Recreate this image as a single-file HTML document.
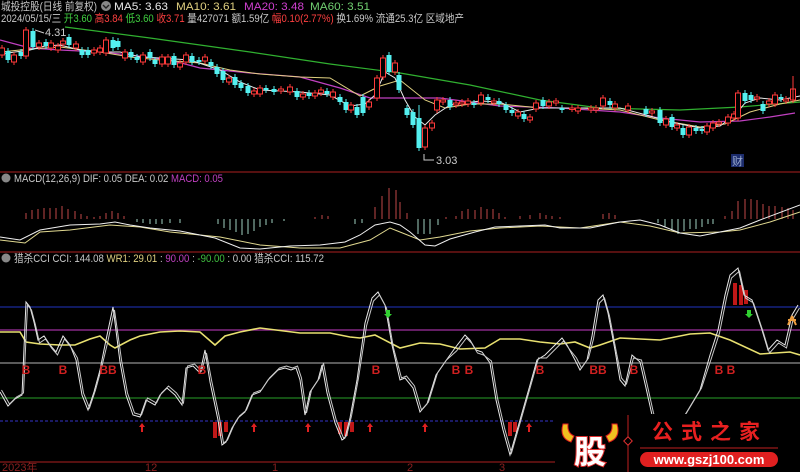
<!DOCTYPE html>
<html><head><meta charset="utf-8"><style>
html,body{margin:0;padding:0;background:#000;width:800px;height:472px;overflow:hidden}
svg{display:block}
text{font-family:"Liberation Sans","Noto Sans CJK SC",sans-serif}
</style></head><body>
<svg id="s" width="800" height="472" xmlns="http://www.w3.org/2000/svg">
<rect width="800" height="472" fill="#000"/>
<g font-size="11">
<text x="1" y="10" fill="#c8c8c8" textLength="96" lengthAdjust="spacingAndGlyphs">城投控股(日线 前复权)</text>
<circle cx="106" cy="6" r="5" fill="#888"/><path d="M103 5l3 3 3-3" stroke="#222" stroke-width="1.4" fill="none"/>
<text x="114" y="10" fill="#e8e8e8" textLength="54" lengthAdjust="spacingAndGlyphs">MA5: 3.63</text>
<text x="176" y="10" fill="#e0d080" textLength="60" lengthAdjust="spacingAndGlyphs">MA10: 3.61</text>
<text x="244" y="10" fill="#d040d0" textLength="60" lengthAdjust="spacingAndGlyphs">MA20: 3.48</text>
<text x="310" y="10" fill="#70d070" textLength="60" lengthAdjust="spacingAndGlyphs">MA60: 3.51</text>
<text x="1" y="22" fill="#c8c8c8" textLength="463" lengthAdjust="spacingAndGlyphs">2024/05/15/三 <tspan fill="#40d040">开3.60</tspan> <tspan fill="#ff4040">高3.84</tspan> <tspan fill="#40d040">低3.60</tspan> <tspan fill="#ff4040">收3.71</tspan> 量427071 额1.59亿 <tspan fill="#ff4040">幅0.10(2.77%)</tspan> 换1.69% 流通25.3亿 区域地产</text>
</g>
<g stroke="#8a1a1a" stroke-width="1.3"><line x1="0" y1="172" x2="800" y2="172"/><line x1="0" y1="252" x2="800" y2="252"/><line x1="0" y1="462" x2="555" y2="462"/></g>
<g font-size="11">
<circle cx="6" cy="178" r="4.5" fill="#888"/><circle cx="6" cy="258" r="4.5" fill="#888"/>
<text x="14" y="182" fill="#c8c8c8" textLength="209" lengthAdjust="spacingAndGlyphs">MACD(12,26,9)  DIF: 0.05  DEA: 0.02 <tspan fill="#c040c0">MACD: 0.05</tspan></text>
<text x="14" y="262" fill="#c8c8c8" textLength="310" lengthAdjust="spacingAndGlyphs">猎杀CCI  CCI: 144.08 <tspan fill="#e0d080">WR1: 29.01</tspan> : <tspan fill="#c040c0">90.00</tspan> : <tspan fill="#40c040">-90.00</tspan> : 0.00  猎杀CCI: 115.72</text>
</g>
<g id="main"></g>
<text x="45" y="36" fill="#ccc" font-size="11">4.31</text><path d="M35 30 L44 33" stroke="#ccc"/>
<text x="436" y="164" fill="#ccc" font-size="11">3.03</text><path d="M424 154 L424 160 L434 160" stroke="#ccc" fill="none"/>
<rect x="731" y="154" width="13" height="13" fill="#1c2c6c"/><text x="732" y="165" fill="#9ac" font-size="11">财</text>
<g stroke-width="1.2">
<line x1="0" y1="307" x2="800" y2="307" stroke="#1a2a9a"/>
<line x1="0" y1="330" x2="800" y2="330" stroke="#a030a0"/>
<line x1="0" y1="363" x2="800" y2="363" stroke="#909090"/>
<line x1="0" y1="398" x2="800" y2="398" stroke="#208020"/>
<line x1="0" y1="421" x2="555" y2="421" stroke="#2a2aa0" stroke-dasharray="3,2"/>
</g>
<g id="cci"></g>
<g font-size="11" fill="#8a2020"><text x="2" y="471">2023年</text><text x="145" y="471">12</text><text x="272" y="471">1</text><text x="407" y="471">2</text><text x="499" y="471">3</text></g>
<rect x="555" y="414" width="245" height="58" fill="#000"/>
<path d="M563 424 q-4 14 8 18 l3-6 q-7-3-6-12z" fill="#f0c020" stroke="#e02020"/>
<path d="M617 424 q4 14-8 18 l-3-6 q7-3 6-12z" fill="#f0c020" stroke="#e02020"/>
<text x="590" y="463" text-anchor="middle" font-size="32" font-weight="bold" fill="#fff" stroke="#e03030" stroke-width="2" paint-order="stroke">股</text>
<line x1="628" y1="415" x2="628" y2="472" stroke="#c02020"/>
<rect x="625" y="438" width="6" height="6" transform="rotate(45 628 441)" fill="#000" stroke="#e03030"/>
<text x="710" y="439" text-anchor="middle" font-size="21" font-weight="bold" fill="#e82020" letter-spacing="8" font-family="Noto Serif CJK SC,serif">公式之家</text>
<line x1="640" y1="448" x2="778" y2="448" stroke="#c02020"/>
<rect x="640" y="452" width="138" height="15" rx="7.5" fill="#e02020"/>
<text x="709" y="464" text-anchor="middle" font-size="13" font-weight="bold" fill="#fff">www.gszj100.com</text>
<script>
var NS="http://www.w3.org/2000/svg";
function el(p,t,a){var e=document.createElementNS(NS,t);for(var k in a)e.setAttribute(k,a[k]);p.appendChild(e);return e}
function pl(p,pts,c,w){el(p,"polyline",{points:pts,fill:"none",stroke:c,"stroke-width":w||1})}
var m=document.getElementById("main");
pl(m,"65,27 150,38 250,52 330,64 400,73 470,85 540,100 600,108 680,110 740,107 800,102","#30b030",1.2);
pl(m,"0,40 30,48 60,50 100,52 130,55 170,60 200,68 250,73 300,77 340,88 370,98 400,98 440,98 500,106 560,108 620,112 660,118 700,122 740,121 770,117 795,113","#c040c0",1.2);
pl(m,"0,52 30,49 60,47 100,52 130,57 160,60 200,63 230,70 260,74 300,77 330,78 360,96 380,86 400,80 425,100 445,108 470,104 500,104 540,108 580,108 620,110 660,120 700,127 725,124 750,112 780,104 800,100","#e0d080",1);
pl(m,"0,54 30,50 45,46 60,45 80,50 100,52 120,52 140,57 160,58 190,60 220,70 240,82 260,90 300,92 330,95 350,106 365,104 375,95 385,72 395,78 405,100 415,117 425,125 435,115 450,105 480,101 500,102 520,112 540,108 580,108 620,108 650,116 670,122 700,128 720,126 735,115 745,103 760,98 780,100 800,96","#e8e8e8",1);
var C=[[2,48,55,0],[8,51,60,1],[14,55,62,0],[21,52,56,1],[26,30,56,0],[33,31,47,1],[39,43,47,0],[46,42,46,1],[51,43,48,0],[58,46,50,0],[63,41,44,0],[69,37,45,1],[76,44,48,0],[82,50,55,1],[88,50,55,1],[94,50,53,0],[100,48,52,0],[106,40,53,0],[113,40,48,1],[118,41,47,1],[125,52,58,0],[131,52,57,1],[137,57,60,1],[143,55,62,0],[150,52,58,1],[155,60,64,1],[162,57,64,0],[168,57,64,0],[174,56,65,1],[180,63,67,0],[186,55,62,0],[192,56,62,1],[199,60,62,1],[205,57,61,0],[211,62,66,1],[217,67,74,1],[223,71,80,1],[229,78,82,0],[235,77,85,1],[241,83,88,1],[248,86,93,1],[254,91,94,0],[260,88,94,0],[266,88,90,1],[274,89,92,1],[281,89,91,0],[290,87,92,0],[297,91,97,1],[303,94,97,0],[309,93,96,1],[315,93,96,0],[321,90,93,0],[327,91,94,1],[333,92,97,0],[340,97,102,1],[346,102,110,1],[351,105,110,0],[357,107,115,1],[363,97,113,1],[369,102,107,0],[377,78,98,0],[383,58,77,0],[389,55,72,1],[395,63,72,0],[399,75,90,1],[407,108,115,1],[413,112,125,1],[419,118,148,1],[425,128,147,0],[432,123,128,0],[437,100,110,0],[443,100,102,0],[450,100,107,1],[456,103,105,0],[462,102,104,0],[468,101,104,0],[474,103,105,1],[481,95,103,0],[488,97,100,1],[494,101,103,0],[499,101,104,1],[506,105,110,1],[512,110,113,1],[518,112,116,0],[524,114,119,1],[530,117,120,0],[536,103,109,0],[543,100,106,1],[549,102,106,0],[556,101,103,0],[562,108,110,1],[572,108,109,0],[578,108,111,0],[591,108,110,0],[596,108,110,0],[603,98,106,0],[610,101,105,1],[615,104,108,0],[628,106,110,0],[646,109,114,1],[652,111,113,0],[660,110,123,1],[666,119,125,0],[672,117,127,1],[677,125,128,0],[683,128,135,1],[689,127,135,0],[696,128,131,1],[702,129,131,1],[707,126,132,0],[713,123,128,0],[719,122,124,0],[728,117,123,0],[734,114,118,0],[738,93,118,0],[745,93,101,1],[751,95,100,1],[757,97,99,0],[763,104,111,1],[769,101,104,0],[775,95,104,0],[781,97,99,1],[786,99,101,0],[793,89,100,0]];
C.forEach(function(c){var col=c[3]?"#54f0f0":"#ff3a3a";var x=c[0],t=c[1],b=c[2];
el(m,"line",{x1:x,y1:t-3,x2:x,y2:b+3,stroke:col});
if(c[3])el(m,"rect",{x:x-2.5,y:t,width:5,height:Math.max(b-t,1.5),fill:col});
else el(m,"rect",{x:x-2.5,y:t,width:5,height:Math.max(b-t,1.5),fill:"#000",stroke:col,"stroke-width":1});});
el(m,"line",{x1:419,y1:105,x2:419,y2:150,stroke:"#54f0f0"});el(m,"line",{x1:793,y1:76,x2:793,y2:100,stroke:"#ff3a3a"});
var Z=219;
var P=[[26,6],[32,9],[38,10],[44,11],[50,11],[56,11],[62,13],[68,10],[75,8],[81,5],[87,3],[94,2],[100,3],[106,6],[112,8],[118,6],[124,3],[315,2],[322,4],[328,3],[375,12],[382,23],[389,31],[396,29],[400,17],[407,6],[446,2],[456,3],[462,8],[468,10],[475,9],[481,12],[487,10],[493,10],[499,6],[505,2],[520,3],[530,4],[540,6],[546,4],[552,3],[560,2],[603,5],[609,6],[615,4],[725,3],[732,8],[738,18],[745,20],[751,20],[757,19],[763,15],[769,13],[775,13],[782,12],[788,11],[793,9]];
var N=[[137,3],[143,4],[150,5],[156,5],[162,5],[170,4],[180,4],[218,5],[224,9],[230,11],[236,13],[242,16],[248,15],[254,12],[260,8],[266,6],[272,4],[284,2],[355,5],[362,4],[418,15],[424,15],[430,15],[438,6],[658,4],[665,8],[672,12],[678,15],[684,12],[690,10],[696,10],[702,8],[708,5],[713,5]];
P.forEach(function(p){el(m,"line",{x1:p[0],y1:Z,x2:p[0],y2:Z-p[1],stroke:"#c04848"})});
N.forEach(function(p){el(m,"line",{x1:p[0],y1:Z,x2:p[0],y2:Z+p[1],stroke:"#a0d0c0"})});
pl(m,"0,240 25,243 40,232 70,230 110,225 140,227 170,232 220,237 260,245 300,248 340,248 370,240 390,228 400,232 420,240 440,237 470,231 500,228 540,226 580,228 620,222 650,226 680,233 720,232 740,230 770,222 800,212","#e0d890",1);
pl(m,"0,237 20,240 40,230 70,225 100,224 115,222 130,225 150,228 180,231 215,238 240,248 260,249 290,246 320,245 345,242 360,235 375,225 390,222 400,225 410,232 425,245 435,246 450,239 475,232 495,227 520,226 545,225 560,228 590,228 620,222 640,220 660,225 680,233 700,236 720,232 740,228 760,220 800,205","#f0f0f0",1);
var g=document.getElementById("cci");
[[215,422,16],[220,422,14],[226,422,10],[340,422,12],[346,422,14],[352,422,10],[510,422,14],[515,422,10],[735,283,22],[741,285,20],[746,290,14]].forEach(function(r){el(g,"rect",{x:r[0]-2,y:r[1],width:4,height:r[2],fill:"#c01818"})});
pl(g,"0,332 20,332 26,342 40,344 60,345 75,345 90,339 100,336 110,345 115,348 130,340 140,336 160,332 180,331 200,332 215,345 225,336 240,332 260,328 300,333 330,333 350,337 360,338 375,335 400,348 420,343 440,344 460,349 485,348 500,339 520,339 540,342 560,344 575,342 590,348 600,345 620,338 660,340 690,334 710,333 730,340 760,354 790,352 800,355","#e8e070",1.6);
var W="0,392 8,406 15,399 22,395 26,302 30,307 34,322 38,340 44,336 50,345 56,352 63,336 70,345 76,360 82,395 88,410 94,392 100,370 106,340 113,307 120,362 126,395 133,415 140,417 146,400 155,405 160,395 167,388 175,395 182,405 186,368 193,366 200,373 205,350 210,382 218,420 222,445 226,442 232,428 238,418 245,412 252,395 260,392 268,380 278,370 285,368 291,370 296,368 300,380 305,415 310,392 318,380 322,365 327,393 335,423 342,440 345,438 350,418 357,380 365,323 372,298 378,292 385,305 392,345 400,380 405,378 413,388 420,412 427,404 436,375 445,362 455,348 465,335 470,340 476,350 482,352 490,363 496,400 503,430 510,455 520,420 530,385 537,360 545,355 555,345 562,338 567,345 575,360 580,370 587,360 592,336 598,300 603,295 608,313 615,350 620,380 625,386 632,355 640,362 646,388 652,415 658,430 663,440 668,435 685,415 700,390 710,355 718,330 725,295 730,275 738,268 744,295 752,300 762,330 768,350 777,340 785,345 792,315 798,305";
pl(g,W,"#e8e8e8",1);
var W2=W.split(" ").map(function(s){var a=s.split(",");return (+a[0]+1.5)+","+(+a[1]+(a[1]<360?3:-2))}).join(" ");
pl(g,W2,"#c8c8c8",1);
[[26,""],[63,""],[108,"BB"],[202,""],[376,""],[456,""],[469,""],[540,""],[598,"BB"],[634,""],[719,""],[731,""]].forEach(function(b){var t=el(g,"text",{x:b[0],y:374,fill:"#d02020","font-size":12,"font-weight":"bold","text-anchor":"middle"});t.textContent=b[1]||"B"});
[142,254,308,370,425,529].forEach(function(x){el(g,"path",{d:"M"+x+" 423 l-3 4 h2 v5 h2 v-5 h2z",fill:"#e02020"})});
[388,749].forEach(function(x){el(g,"path",{d:"M"+x+" 318 l-4-4 h2 v-4 h4 v4 h2z",fill:"#30d030"})});
el(g,"path",{d:"M792 316 l-4 9 M792 316 l4 9 M788 320 h8",stroke:"#f0a040","stroke-width":2,fill:"none"});
</script>
</svg>
</body></html>
